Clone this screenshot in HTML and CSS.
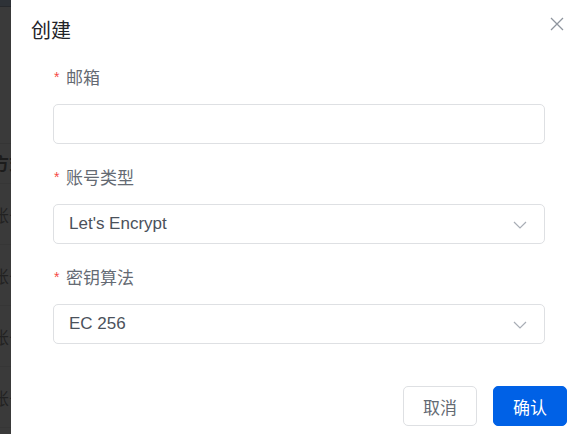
FILE: index.html
```html
<!DOCTYPE html>
<html lang="zh-CN">
<head>
<meta charset="utf-8">
<title>创建</title>
<link rel="stylesheet" href="styles.css">
</head>
<body>
<div class="page">
  <aside class="backdrop">
    <div class="topbar"></div>
    <div class="spacer"></div>
    <div class="row head"><span>方式</span></div>
    <div class="row"><span>账号</span></div>
    <div class="row"><span>账号</span></div>
    <div class="row"><span>账号</span></div>
    <div class="row"><span>账号</span></div>
  </aside>
  <section class="dialog">
    <header class="dialog-header">
      <h1 class="dialog-title">创建</h1>
      <button class="close" aria-label="关闭">
        <svg width="14" height="14" viewBox="0 0 14 14"><path d="M1 1L13 13M13 1L1 13" stroke="#8f959e" stroke-width="1.3" fill="none"/></svg>
      </button>
    </header>
    <form class="form">
      <div class="item">
        <label class="label"><span class="req">*</span>邮箱</label>
        <div class="control"></div>
      </div>
      <div class="item">
        <label class="label"><span class="req">*</span>账号类型</label>
        <div class="control select"><span>Let's Encrypt</span>
          <svg class="chev" width="14" height="8" viewBox="0 0 14 8"><path d="M1 1L7 7L13 1" stroke="#a8adb5" stroke-width="1.2" fill="none"/></svg>
        </div>
      </div>
      <div class="item">
        <label class="label"><span class="req">*</span>密钥算法</label>
        <div class="control select"><span>EC 256</span>
          <svg class="chev" width="14" height="8" viewBox="0 0 14 8"><path d="M1 1L7 7L13 1" stroke="#a8adb5" stroke-width="1.2" fill="none"/></svg>
        </div>
      </div>
    </form>
    <footer class="footer">
      <button class="btn">取消</button>
      <button class="btn primary">确认</button>
    </footer>
  </section>
</div>
</body>
</html>
```
FILE: styles.css
```css
* { box-sizing: border-box; }
html, body { margin: 0; padding: 0; }
body {
  font-family: "Liberation Sans", "Noto Sans CJK SC", sans-serif;
  background: #3a3a3a;
}
.page {
  display: flex;
  width: 585px;
  height: 434px;
  overflow: hidden;
}
.backdrop {
  width: 11px;
  flex: none;
  overflow: hidden;
  background: #3a3a3a;
  display: flex;
  flex-direction: column;
}
.topbar {
  height: 7px;
  background: #2e3237;
  border-bottom: 1px solid #27292c;
  flex: none;
}
.spacer {
  height: 137px;
  border-bottom: 1px solid #353535;
  flex: none;
}
.row {
  height: 61px;
  flex: none;
  border-bottom: 1px solid #363636;
  display: flex;
  align-items: center;
  font-size: 17px;
  color: #222;
  white-space: nowrap;
}
.row span { margin-left: -8px; }
.row.head {
  height: 40px;
  font-weight: bold;
  color: #1c1c1c;
  align-items: flex-start;
  padding-top: 6px;
}
.dialog {
  flex: 1;
  background: #fff;
  display: flex;
  flex-direction: column;
}
.dialog-header {
  display: flex;
  align-items: center;
  justify-content: space-between;
  padding: 17px 21px 0 20px;
  height: 45px;
}
.dialog-title {
  margin: 0;
  font-size: 20px;
  line-height: 28px;
  font-weight: normal;
  color: #1f2329;
}
.close {
  border: 0;
  background: none;
  padding: 0;
  width: 14px;
  height: 14px;
  margin-top: -14px;
  display: flex;
}
.form {
  padding: 22px 40px 0 42px;
  display: flex;
  flex-direction: column;
  gap: 23px;
}
.item {
  display: flex;
  flex-direction: column;
  gap: 13px;
}
.label {
  font-size: 17px;
  line-height: 24px;
  color: #646a73;
  display: flex;
  align-items: center;
}
.req {
  color: #f54a45;
  font-size: 14px;
  width: 12px;
  margin-left: 1px;
  position: relative;
  top: -2px;
}
.control {
  height: 40px;
  border: 1px solid #dee0e3;
  border-radius: 5px;
  background: #fff;
  display: flex;
  align-items: center;
  padding: 0 17px 0 15px;
  font-size: 17px;
  color: #4b515b;
}
.select { justify-content: space-between; }
.chev { margin-top: 1px; }
.footer {
  margin-top: 42px;
  padding-right: 18px;
  display: flex;
  justify-content: flex-end;
  gap: 16px;
}
.btn {
  width: 74px;
  height: 40px;
  border: 1px solid #dee0e3;
  border-radius: 5px;
  background: #fff;
  color: #646a73;
  font-family: "Liberation Sans", "Noto Sans CJK SC", sans-serif;
  font-size: 17px;
  padding: 0;
}
.btn.primary {
  background: #0061e6;
  border-color: #0061e6;
  color: #fff;
}
```
